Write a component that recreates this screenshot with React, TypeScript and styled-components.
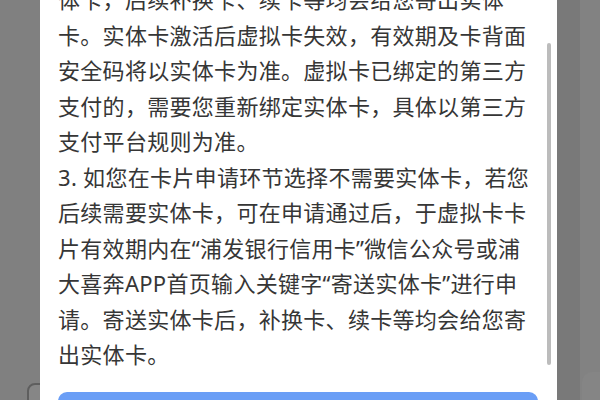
import styled, { createGlobalStyle } from "styled-components";

const GlobalStyle = createGlobalStyle`
  html, body {
    margin: 0;
    padding: 0;
    background: #7f7f7f;
  }
  #root {
    width: 600px;
    height: 400px;
  }
`;

const paragraphs: string[][] = [
  [
    "体卡，后续补换卡、续卡等均会给您寄出实体",
    "卡。实体卡激活后虚拟卡失效，有效期及卡背面",
    "安全码将以实体卡为准。虚拟卡已绑定的第三方",
    "支付的，需要您重新绑定实体卡，具体以第三方",
    "支付平台规则为准。",
  ],
  [
    "3. 如您在卡片申请环节选择不需要实体卡，若您",
    "后续需要实体卡，可在申请通过后，于虚拟卡卡",
    "片有效期内在“浦发银行信用卡”微信公众号或浦",
    "大喜奔APP首页输入关键字“寄送实体卡”进行申",
    "请。寄送实体卡后，补换卡、续卡等均会给您寄",
    "出实体卡。",
  ],
];

const Page = styled.div`
  position: relative;
  width: 600px;
  height: 400px;
  overflow: hidden;
  display: flex;
  padding-left: 40px;
  box-sizing: border-box;
  background: linear-gradient(
    to right,
    #808080 0px,
    #808080 557px,
    #797979 557px,
    #797979 580px,
    #828282 580px
  );
`;

const BackCard = styled.div`
  position: absolute;
  left: 27px;
  top: 383px;
  width: 40px;
  height: 40px;
  border: 2px solid #5e5e5e;
  border-radius: 8px;
  background: #868686;
`;

const BackTab = styled.div`
  position: absolute;
  left: 582px;
  top: 372px;
  width: 40px;
  height: 40px;
  border-radius: 10px;
  background: #858585;
`;

const Modal = styled.div`
  position: relative;
  z-index: 1;
  width: 517px;
  height: 480px;
  margin-top: -18px;
  background: #ffffff;
  padding: 0 18px;
  box-sizing: border-box;
  display: flex;
  flex-direction: column;
`;

const Body = styled.div`
  font-family: "Noto Sans", "Noto Sans CJK SC", sans-serif;
  font-size: 22px;
  line-height: 35.5px;
  letter-spacing: 0.3px;
  color: #363636;
`;

const Line = styled.div`
  white-space: nowrap;
`;

const ScrollThumb = styled.div`
  position: absolute;
  right: 6px;
  top: 61px;
  width: 4px;
  height: 322px;
  border-radius: 2px;
  background: #bcbcbc;
`;

const ConfirmButton = styled.button`
  margin-top: 19px;
  width: 480px;
  height: 64px;
  border: none;
  border-radius: 9px;
  background: #6a9ef6;
  color: #ffffff;
  font-family: "Noto Sans", "Noto Sans CJK SC", sans-serif;
  font-size: 20px;
`;

export default function App() {
  return (
    <>
      <GlobalStyle />
      <Page>
        <BackCard />
        <BackTab />
        <Modal>
          <Body>
            {paragraphs.map((lines, i) =>
              lines.map((line, j) => <Line key={`${i}-${j}`}>{line}</Line>)
            )}
          </Body>
          <ConfirmButton>我知道了</ConfirmButton>
          <ScrollThumb />
        </Modal>
      </Page>
    </>
  );
}
